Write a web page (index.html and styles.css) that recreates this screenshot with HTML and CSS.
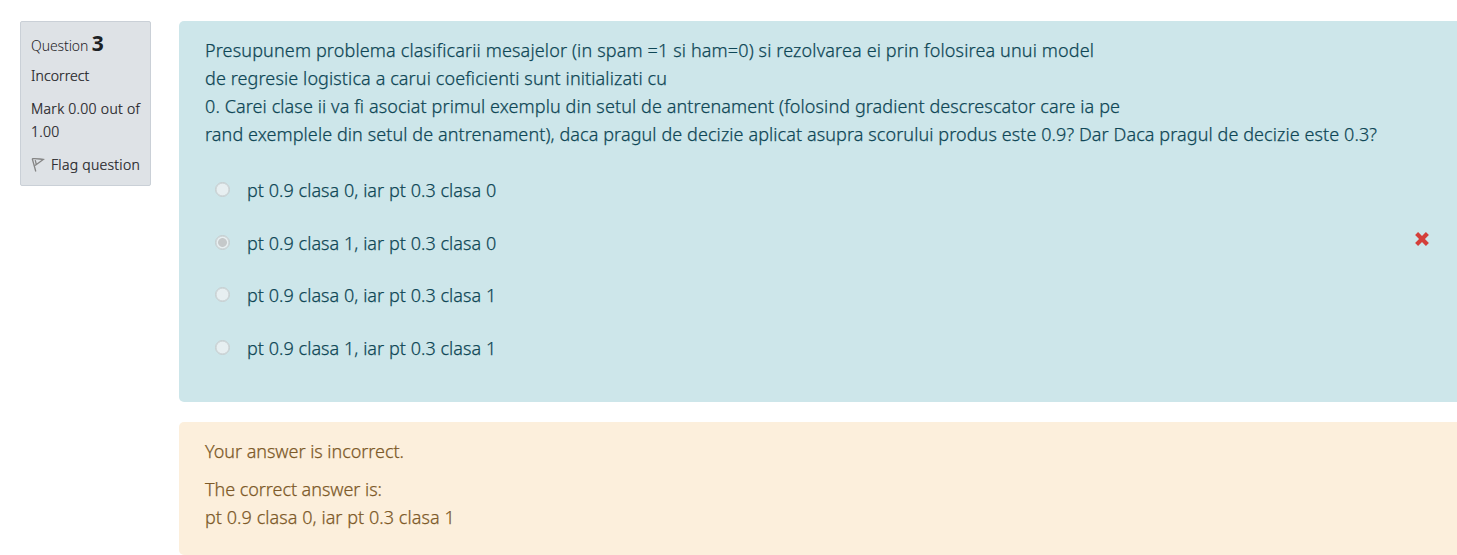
FILE: index.html
```html
<!DOCTYPE html>
<html lang="ro">
<head>
<meta charset="utf-8">
<title>Question 3</title>
<link rel="stylesheet" href="styles.css">
</head>
<body>
<div class="question">
  <aside class="info">
    <h3 class="number">Question <b>3</b></h3>
    <div class="state">Incorrect</div>
    <div class="grade">Mark 0.00 out of<br>1.00</div>
    <div class="flag">
      <svg class="flag-icon" width="14" height="16" viewBox="0 0 14 16" fill="none" stroke="#858585" stroke-width="1.3"><path d="M1.2 1.5 4.8 14.5M1.2 1.7C5 1.2 8 2 12.3 2.4L4 8.6M4.2 3.2 5.2 7"/></svg>
      <span>Flag question</span>
    </div>
  </aside>
  <main class="content">
    <section class="formulation">
      <p class="text">
        <span class="line l1">Presupunem problema clasificarii mesajelor (in spam =1 si ham=0) si rezolvarea ei prin folosirea unui model</span>
        <span class="line l2">de regresie logistica a carui coeficienti sunt initializati cu</span>
        <span class="line l3">0. Carei clase ii va fi asociat primul exemplu din setul de antrenament (folosind gradient descrescator care ia pe</span>
        <span class="line l4">rand exemplele din setul de antrenament), daca pragul de decizie aplicat asupra scorului produs este 0.9? Dar Daca pragul de decizie este 0.3?</span>
      </p>
      <div class="answers">
        <div class="answer"><i class="radio"></i><span>pt 0.9 clasa 0, iar pt 0.3 clasa 0</span></div>
        <div class="answer"><i class="radio checked"></i><span>pt 0.9 clasa 1, iar pt 0.3 clasa 0</span>
          <svg class="wrong" width="14" height="14" viewBox="0 0 14 14" stroke="#d43f3a" stroke-width="4.2"><path d="M1.6 1.6 12.4 12.4M12.4 1.6 1.6 12.4"/></svg>
        </div>
        <div class="answer"><i class="radio"></i><span>pt 0.9 clasa 0, iar pt 0.3 clasa 1</span></div>
        <div class="answer"><i class="radio"></i><span>pt 0.9 clasa 1, iar pt 0.3 clasa 1</span></div>
      </div>
    </section>
    <section class="feedback">
      <p class="verdict">Your answer is incorrect.</p>
      <p class="correct">The correct answer is:<br><span class="right">pt 0.9 clasa 0, iar pt 0.3 clasa 1</span></p>
    </section>
  </main>
</div>
</body>
</html>
```
FILE: styles.css
```css
* { box-sizing: border-box; }
body { margin: 0; background: #fff; font-family: "Noto Sans", "Open Sans", sans-serif; font-weight: 300; overflow: hidden; }
p, h3 { margin: 0; font-weight: 300; }
.question { display: flex; align-items: flex-start; gap: 28px; padding: 21px 0 0 20px; }
.info { flex: 0 0 131px; height: 165px; padding: 8px 0 0 10px; background: #dee2e6; border: 1px solid #cad0d7; border-radius: 2px; color: #1d2125; font-size: 14px; line-height: 23px; white-space: nowrap; }
.info .number { font-size: 14px; line-height: 31px; height: 27px; letter-spacing: -.1px; }
.number b { font-size: 21px; font-weight: 700; line-height: 20px; }
.state, .grade, .flag { -webkit-text-stroke: .22px currentColor; }
.state { margin-top: 7px; letter-spacing: .1px; }
.grade { margin-top: 10px; letter-spacing: .3px; }
.flag { display: flex; align-items: center; gap: 6px; margin-top: 10px; letter-spacing: .27px; }
.flag-icon { flex: none; }
.content { flex: 1; min-width: 0; font-size: 18px; line-height: 28px; letter-spacing: .045px; white-space: nowrap; -webkit-text-stroke: .25px currentColor; }
.formulation { height: 381px; padding: 15px 25px 0 26px; background: #cde6ea; border-radius: 5px 0 0 5px; color: #0f4756; }
.line { display: block; }
.l1 { letter-spacing: .142px; }
.l2 { letter-spacing: .11px; }
.l3 { letter-spacing: .1px; }
.l4 { letter-spacing: .09px; }
.answers { margin-top: 28px; padding-left: 10px; }
.answer { display: flex; align-items: center; height: 28px; margin-bottom: 24.7px; }
.radio { width: 15px; height: 15px; margin: -1px 17px 0 0; border: 1px solid #c5cdcf; border-radius: 50%; background: #e7eff1; box-shadow: inset 0 0 0 .5px #c5cdcf; position: relative; left: -.5px; }
.radio.checked { background: radial-gradient(circle, #c5c9ca 0 4px, #e7eff1 4.8px); }
.wrong { margin: -7px 3px 0 auto; }
.feedback { height: 133px; margin-top: 20px; padding: 15px 26px; background: #fcefdc; border-radius: 5px 0 0 5px; color: #7d5a29; }
.verdict { letter-spacing: -.04px; }
.correct { margin-top: 10px; letter-spacing: -.05px; }
.right { letter-spacing: .06px; }
```
